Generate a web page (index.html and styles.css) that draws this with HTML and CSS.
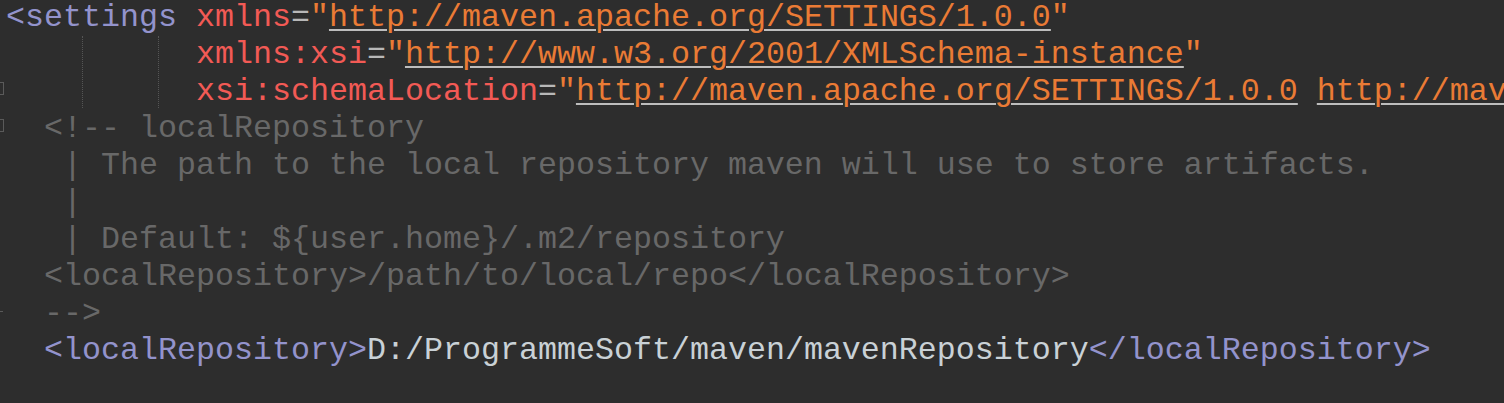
FILE: index.html
```html
<!DOCTYPE html>
<html lang="en">
<head>
  <meta charset="UTF-8">
  <title>settings.xml</title>
  <link rel="stylesheet" href="styles.css">
</head>
<body>
  <div class="editor">
    <span class="fold fold-open" style="top: 82px"></span>
    <span class="fold fold-open" style="top: 119px"></span>
    <span class="fold fold-end" style="top: 311px"></span>
    <span class="guide" style="left: 82px"></span>
    <span class="guide" style="left: 158px"></span>
<pre class="code"><span class="tag">&lt;settings</span> <span class="attr">xmlns</span><span class="eq">=</span><span class="val">"<u>http://maven.apache.org/SETTINGS/1.0.0</u>"</span>
          <span class="attr">xmlns:xsi</span><span class="eq">=</span><span class="val">"<u>http://www.w3.org/2001/XMLSchema-instance</u>"</span>
          <span class="attr">xsi:schemaLocation</span><span class="eq">=</span><span class="val">"<u>http://maven.apache.org/SETTINGS/1.0.0</u> <u>http://maven.apache.org/xsd/settings-1.0.0.xsd</u>"</span><span class="tag">&gt;</span>
  <span class="comment">&lt;!-- localRepository</span>
<span class="comment">   | The path to the local repository maven will use to store artifacts.</span>
<span class="comment">   |</span>
<span class="comment">   | Default: ${user.home}/.m2/repository</span>
<span class="comment">  &lt;localRepository&gt;/path/to/local/repo&lt;/localRepository&gt;</span>
<span class="comment">  --&gt;</span>
  <span class="tag">&lt;localRepository&gt;</span><span class="text">D:/ProgrammeSoft/maven/mavenRepository</span><span class="tag">&lt;/localRepository&gt;</span>
</pre>
  </div>
</body>
</html>
```

FILE: styles.css
```css
html, body {
  margin: 0;
  height: 100%;
  background-color: #2d2d2d;
  overflow: hidden;
}

.editor {
  position: relative;
  height: 403px;
  overflow: hidden;
  background-color: #2d2d2d;
}

.code {
  margin: 0;
  padding: 0 0 0 6px;
  font-family: "Liberation Mono", "Courier New", monospace;
  font-size: 31.66px;
  line-height: 37px;
  white-space: pre;
  color: #c9d1d6;
}

.tag {
  color: #9393cc;
}

.attr {
  color: #f25a55;
}

.eq {
  color: #b8b8b8;
}

.val {
  color: #ea7b35;
}

.val u {
  text-decoration: underline;
  text-decoration-color: #bdbdbd;
  text-decoration-thickness: 2px;
  text-underline-offset: 3px;
}

.comment {
  color: #686868;
}

.text {
  color: #c9d1d6;
}

.guide {
  position: absolute;
  top: 36px;
  height: 72px;
  width: 0;
  border-left: 1px dotted #555;
}

.fold {
  position: absolute;
  left: -7px;
  width: 9px;
  height: 11px;
  border: 1px solid #5a5a5a;
}

.fold-end {
  height: 0;
  border-width: 1px 0 0 0;
  left: 0;
  width: 3px;
}
```
